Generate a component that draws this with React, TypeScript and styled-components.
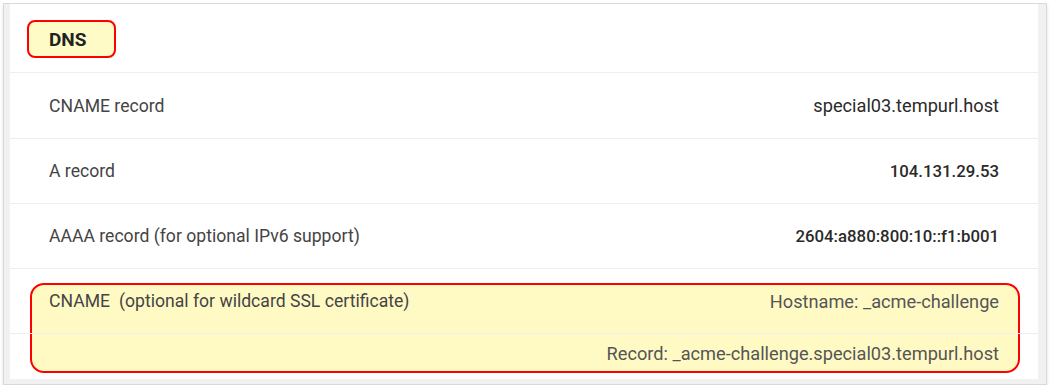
import React from 'react'
import styled, { createGlobalStyle } from 'styled-components'

const GlobalStyle = createGlobalStyle`
  html, body {
    margin: 0;
    padding: 0;
    background: #ffffff;
  }
  body {
    font-family: Roboto, "Liberation Sans", Arial, sans-serif;
    -webkit-font-smoothing: antialiased;
  }
`

const Frame = styled.div`
  width: 1028px;
  margin: 3px 0 0 3px;
  padding: 0 8px 5px 6px;
  border: 1px solid #d9d9d9;
  background: #f1f1f1;
  box-shadow: 0 2px 3px rgba(0, 0, 0, 0.12);
`

const Panel = styled.div`
  background: #ffffff;
  display: flex;
  flex-direction: column;
`

const Header = styled.div`
  height: 68px;
  display: flex;
  align-items: center;
  padding-left: 17px;
`

const Badge = styled.span`
  display: inline-flex;
  align-items: center;
  height: 34px;
  margin-top: 2px;
  padding: 0 28px 0 20px;
  border: 2px solid #ff0000;
  border-radius: 8px;
  background: #fffbc6;
  color: #222;
  font-size: 19px;
  font-weight: 700;
`

type RowProps = {
  h: number
  pt?: number
}

const Row = styled.div<RowProps>`
  position: relative;
  z-index: 1;
  height: ${({ h }) => h}px;
  box-sizing: border-box;
  display: flex;
  align-items: ${({ pt }) => (pt ? 'flex-start' : 'center')};
  justify-content: space-between;
  padding: ${({ pt }) => pt || 0}px 39px 0 39px;
  border-top: 1px solid #efefef;
`

const Label = styled.span`
  color: #444;
  font-size: 17.6px;
`

type ValueProps = {
  strong?: boolean
  soft?: boolean
}

const Value = styled.span<ValueProps>`
  color: ${({ soft }) => (soft ? '#555' : '#2a2a2a')};
  font-size: ${({ strong }) => (strong ? '16.8px' : '18.2px')};
  font-weight: ${({ strong }) => (strong ? 500 : 400)};
`

const Group = styled.div`
  position: relative;
`

const Marker = styled.div`
  position: absolute;
  z-index: 0;
  top: 15px;
  left: 20px;
  right: 18px;
  bottom: 6px;
  border: 2px solid #ff0000;
  border-radius: 14px;
  background: #fffac4;
`

const Gap = styled.span`
  display: inline-block;
  width: 9px;
`

const records = [
  { label: 'CNAME record', value: 'special03.tempurl.host', strong: false, h: 66 },
  { label: 'A record', value: '104.131.29.53', strong: true, h: 65 },
  { label: 'AAAA record (for optional IPv6 support)', value: '2604:a880:800:10::f1:b001', strong: true, h: 65 }
]

const App = () => {
  return (
    <>
      <GlobalStyle />
      <Frame>
        <Panel>
          <Header>
            <Badge>DNS</Badge>
          </Header>
          {records.map((r) => (
            <Row key={r.label} h={r.h}>
              <Label>{r.label}</Label>
              <Value strong={r.strong}>{r.value}</Value>
            </Row>
          ))}
          <Group>
            <Marker />
            <Row h={65}>
              <Label>
                CNAME<Gap />(optional for wildcard SSL certificate)
              </Label>
              <Value soft>Hostname: _acme-challenge</Value>
            </Row>
            <Row h={46} pt={9}>
              <Label />
              <Value soft>Record: _acme-challenge.special03.tempurl.host</Value>
            </Row>
          </Group>
        </Panel>
      </Frame>
    </>
  )
}

export default App
